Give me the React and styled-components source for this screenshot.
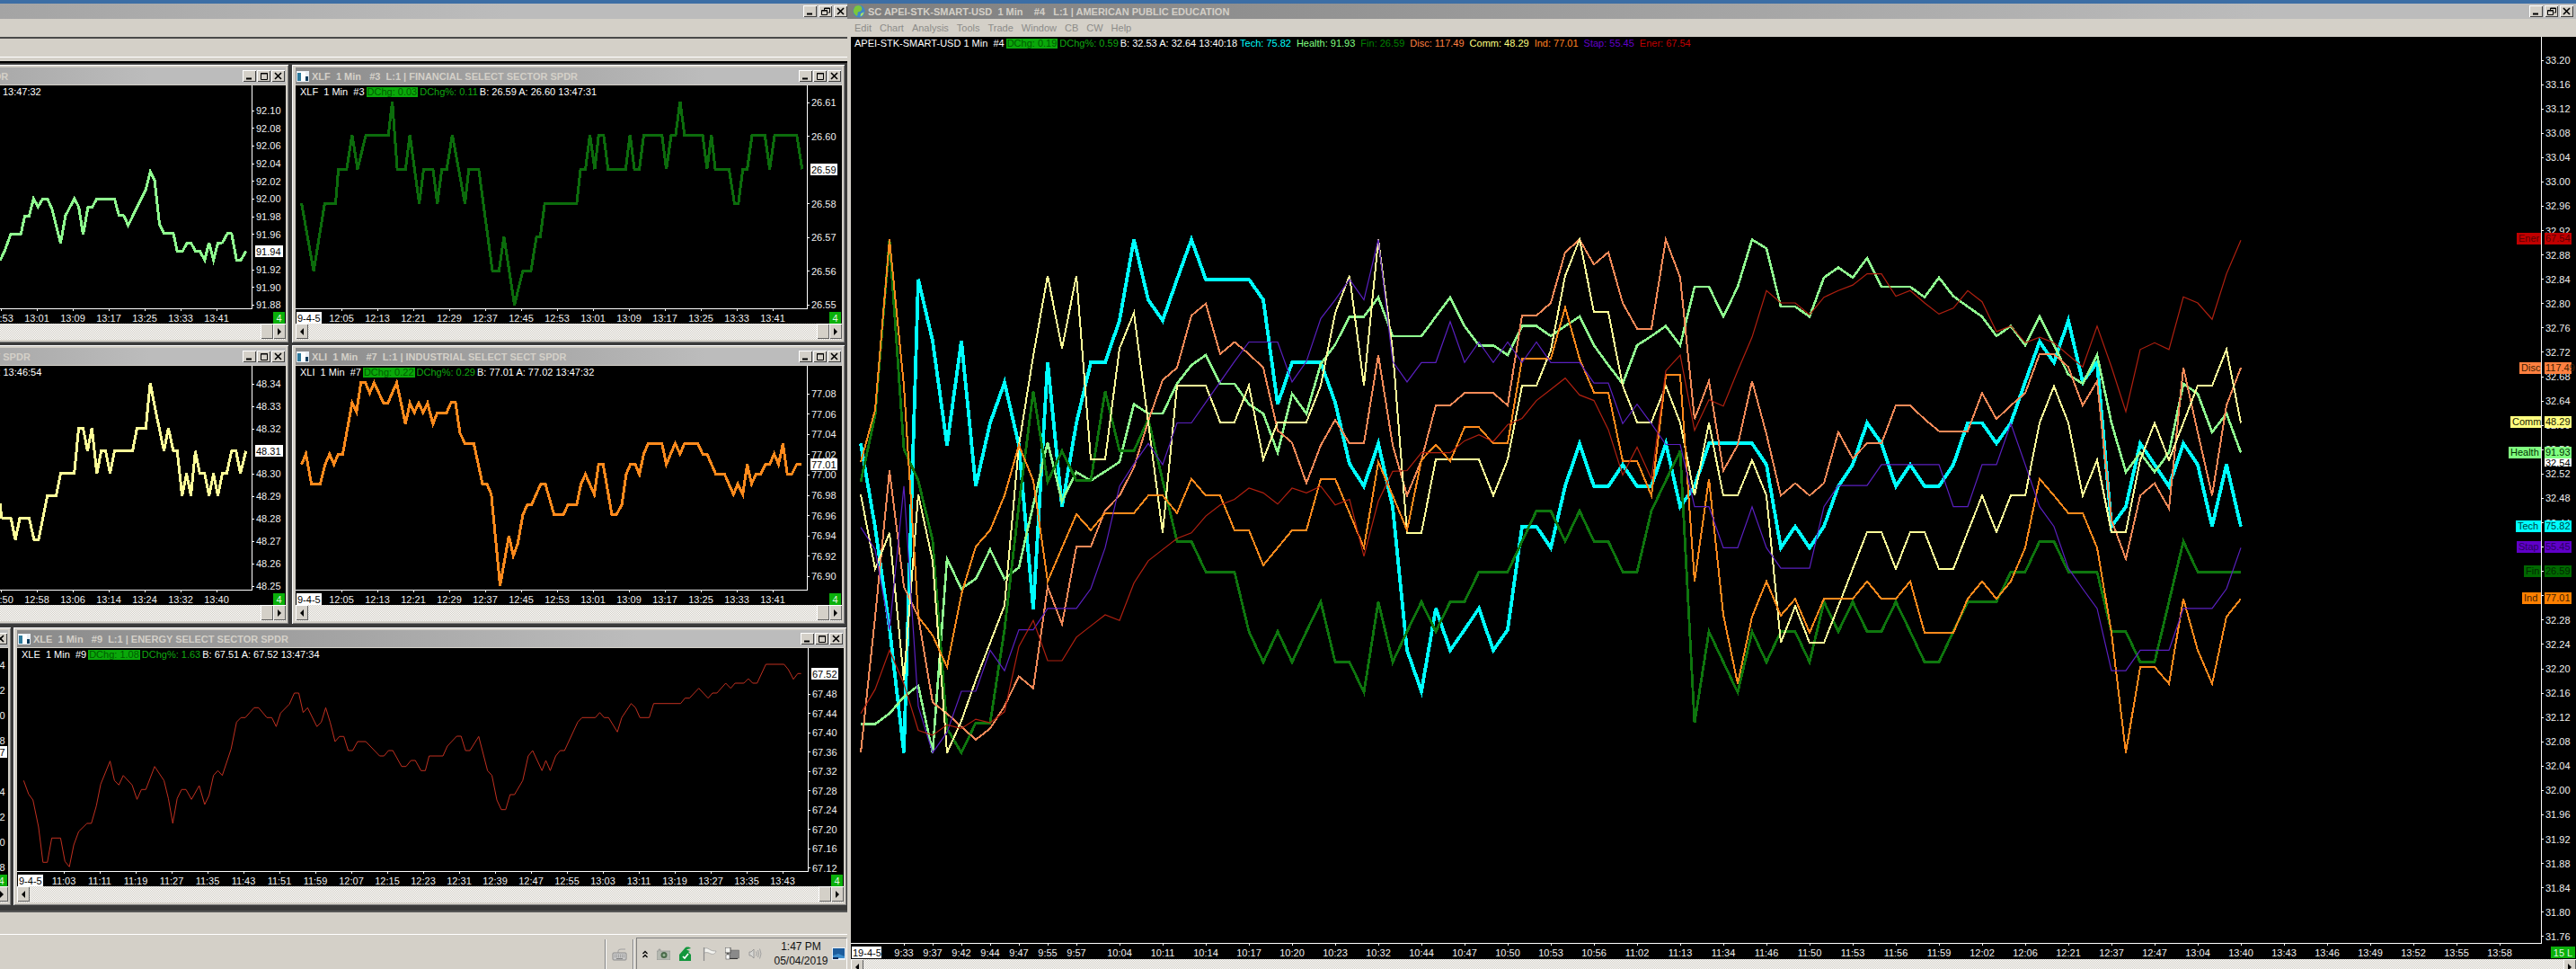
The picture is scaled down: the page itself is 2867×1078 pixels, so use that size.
import React from 'react'
import styled, { createGlobalStyle } from 'styled-components'

const GlobalStyle = createGlobalStyle`
  html, body { margin: 0; padding: 0; background: #d4d0c8; }
  body { font-family: "Liberation Sans", Arial, sans-serif; font-size: 11px; }
`;

const Page = styled.div`
  width: 2867px;
  height: 1078px;
  overflow: hidden;
  display: flex;
  flex-direction: column;
  background: #d4d0c8;
`;

const BlueStrip = styled.div`
  height: 4px;
  flex: none;
  background: #3c6ea5;
`;

const Frames = styled.div`
  flex: 1;
  display: flex;
  min-height: 0;
`;

const LeftFrame = styled.div`
  width: 943px;
  flex: none;
  display: flex;
  flex-direction: column;
  overflow: hidden;
`;

const MainFrame = styled.div`
  flex: 1;
  display: flex;
  flex-direction: column;
  min-width: 0;
`;

const TitleBar = styled.div`
  height: ${props => props.$height}px;
  flex: none;
  display: flex;
  align-items: center;
  gap: 3px;
  padding-left: ${props => props.$pad}px;
  background: linear-gradient(to right, ${props => props.$from}, #bcbcbc ${props => props.$stop});
  color: #d4d0c8;
  font-weight: bold;
  white-space: pre;
  overflow: hidden;
`;

const TitleText = styled.span`
  flex: 1;
  min-width: 0;
  overflow: hidden;
  font-size: 11px;
`;

const WinButtons = styled.div`
  display: flex;
  gap: ${props => props.$gap}px;
  padding-right: ${props => props.$right}px;
  flex: none;
`;

const WinButton = styled.div`
  width: 15px;
  height: 13px;
  background: #d4d0c8;
  box-shadow: inset 1px 1px 0 #fff, inset -1px -1px 0 #404040;
  display: flex;
  align-items: center;
  justify-content: center;
`;

const MenuBar = styled.div`
  height: 20px;
  flex: none;
  display: flex;
  align-items: center;
  gap: 9px;
  padding-left: 8px;
  color: #8c8c88;
  font-size: 11px;
`;

const ToolStrip = styled.div`
  height: 27px;
  flex: none;
  box-sizing: border-box;
  border-top: 2px solid #4a4a4a;
  position: relative;
  &::after {
    content: "";
    display: block;
    height: 1px;
    margin-top: 20px;
    background: #fff;
  }
`;

const Workspace = styled.div`
  height: 945px;
  flex: none;
  box-sizing: border-box;
  border-top: 2px solid #000;
  padding-top: 2px;
  background: #3a3a3a;
  display: flex;
  flex-direction: column;
`;

const WindowRow = styled.div`
  height: ${props => props.$height}px;
  margin-top: ${props => props.$top}px;
  padding-right: ${props => props.$right}px;
  flex: none;
  display: flex;
  justify-content: flex-end;
  gap: ${props => props.$gap}px;
  overflow: hidden;
`;

const SubWindow = styled.div`
  width: ${props => props.$width}px;
  flex: none;
  box-sizing: border-box;
  padding: 3px 3px 3px 4px;
  background: #d4d0c8;
  box-shadow: inset 1px 1px 0 #fff, inset -1px -1px 0 #808080;
  display: flex;
  flex-direction: column;
`;

const ChartPane = styled.div`
  position: relative;
  background: #000;
  margin-top: ${props => props.$top}px;
  margin-left: ${props => props.$inset || 0}px;
  height: ${props => props.$height}px;
  flex: none;
  overflow: hidden;
`;

const ChartSvg = styled.svg`
  display: block;
  font-family: "Liberation Sans", Arial, sans-serif;
  font-size: 11px;
`;

const HeaderRow = styled.div`
  position: absolute;
  top: ${props => props.$top}px;
  left: ${props => props.$left}px;
  height: 11px;
  display: flex;
  align-items: center;
  gap: ${props => props.$gap}px;
  color: #fff;
  font-size: 11px;
  line-height: 11px;
  white-space: pre;
`;

const HeaderExtras = styled.div`
  display: flex;
  gap: 6px;
  margin-left: 1px;
`;

const ChangeChip = styled.span`
  background: #0aa80a;
  color: #005c00;
  padding: 0 1px;
  height: 11px;
`;

const HeaderItem = styled.span`
  color: ${props => props.$color || '#fff'};
`;

const ScrollTrack = styled.div`
  height: ${props => props.$height}px;
  margin-left: ${props => props.$inset || 0}px;
  flex: none;
  display: flex;
  justify-content: space-between;
  background-color: #e8e6e0;
  background-image: conic-gradient(#fff 25%, #cfcbc2 0 50%, #fff 0 75%, #cfcbc2 0);
  background-size: 2px 2px;
  overflow: hidden;
`;

const ScrollGroup = styled.div`
  display: flex;
`;

const ScrollButton = styled.div`
  width: ${props => props.$width}px;
  height: 17px;
  background: #d4d0c8;
  box-shadow: inset 1px 1px 0 #fff, inset -1px -1px 0 #606060;
  display: flex;
  align-items: center;
  justify-content: center;
`;

const Arrow = styled.i`
  width: 0;
  height: 0;
  border-top: 4px solid transparent;
  border-bottom: 4px solid transparent;
  border-left: ${props => props.$left ? 'none' : '4px solid #000'};
  border-right: ${props => props.$left ? '4px solid #000' : 'none'};
`;

const GrayBand = styled.div`
  height: 26px;
  flex: none;
  box-sizing: border-box;
  border-top: 2px solid #555;
`;

const TaskBar = styled.div`
  flex: 1;
  box-sizing: border-box;
  border-top: 1px solid #fff;
  padding-top: 3px;
  display: flex;
  justify-content: flex-end;
  align-items: stretch;
`;

const TaskDivider = styled.div`
  width: 1px;
  flex: none;
  margin: 2px 0 0 0;
  background: #808080;
  box-shadow: 1px 0 0 #fff;
`;

const Keyboard = styled.div`
  width: 30px;
  flex: none;
  display: flex;
  align-items: center;
  justify-content: center;
  padding-top: 3px;
`;

const TrayBox = styled.div`
  width: 235px;
  flex: none;
  margin-left: 3px;
  box-sizing: border-box;
  border-top: 1px solid #808080;
  border-left: 1px solid #808080;
  border-right: 1px solid #fff;
  padding: 0 1px 0 6px;
  display: flex;
  align-items: center;
`;

const TrayIcons = styled.div`
  display: flex;
  align-items: center;
  justify-content: space-between;
  width: 134px;
  margin-right: 8px;
  flex: none;
`;

const Clock = styled.div`
  width: 69px;
  flex: none;
  text-align: center;
  font-size: 12px;
  line-height: 16px;
  color: #111;
`;

// charts

const mainX = i => 958 + 16 * i;
const mainY = z => 230 + z / 2.412;

const MAIN_SERIES = [
  { color: '#00ffff', width: 3.8, data: [635,860,1130,1465,195,360,640,360,750,580,472,640,1080,418,805,580,418,418,305,88,250,305,195,88,195,195,195,195,250,530,418,418,418,525,690,750,635,805,1190,1300,1078,1190,1135,1078,1190,1135,858,858,915,750,635,750,750,692,750,750,635,805,750,635,635,635,635,692,915,858,915,858,750,692,580,635,750,692,750,750,692,580,580,635,580,470,362,418,305,470,418,858,805,635,692,750,635,692,858,692,858] },
  { color: '#90ff90', width: 2.6, data: [1388,1388,1360,1315,1285,1465,945,1025,998,920,998,968,800,632,790,712,735,710,685,530,555,555,475,425,398,475,475,530,555,660,502,555,422,370,295,295,243,347,347,347,295,243,320,372,372,398,320,320,347,320,295,372,425,475,372,347,320,372,215,215,295,215,88,112,268,268,295,190,163,190,138,215,215,215,243,190,240,268,295,347,320,372,295,372,450,475,398,580,712,660,712,660,475,502,605,555,660] },
  { color: '#0e760e', width: 2.8, data: [738,560,90,650,735,895,1400,1465,1385,1385,1135,800,495,738,655,735,735,495,655,655,570,735,898,898,980,980,980,1140,1222,1140,1222,1140,1060,1222,1222,1303,1060,1222,1140,1060,1140,1060,1060,980,980,980,898,816,816,898,816,898,898,980,980,816,735,655,1385,1140,1222,1303,1140,1222,1140,1140,1222,1060,1140,1060,1140,1140,1060,1140,1222,1222,1140,1060,1060,1060,980,980,898,898,980,980,980,1140,1140,1222,1222,1060,898,980,980,980,980] },
  { color: '#f48a58', width: 2, data: [1465,1100,708,1020,1100,1330,1360,1395,1430,1400,1340,1260,1292,1020,1120,912,912,815,775,700,575,465,432,292,260,395,363,395,432,600,633,742,640,572,635,635,398,640,775,680,533,533,500,500,500,533,292,292,258,122,88,155,122,258,327,327,88,190,570,468,708,640,468,610,775,742,775,742,605,675,635,635,533,533,570,602,602,602,500,570,533,500,395,395,430,533,468,840,945,775,742,810,432,605,775,533,432] },
  { color: '#ffff99', width: 2, data: [772,972,875,1270,772,950,1465,1380,1270,1170,1070,640,400,185,380,185,678,678,380,285,580,875,480,480,480,578,578,480,678,578,578,578,480,285,185,480,88,385,875,875,678,678,678,678,775,678,480,480,385,185,88,283,283,480,578,578,480,580,775,580,775,775,680,775,1170,1072,1170,1170,1072,972,873,873,972,873,873,972,972,873,775,873,775,775,580,482,580,775,680,873,873,680,580,680,580,480,480,383,580] },
  { color: '#ff8a1c', width: 2, data: [685,545,88,480,1100,1150,1235,1040,912,868,775,640,735,1005,915,825,868,822,822,822,775,775,822,730,775,775,868,868,962,915,868,868,730,730,822,915,685,775,868,680,638,683,592,592,635,635,408,408,408,270,408,498,498,682,682,775,452,452,1005,730,1095,1280,1100,1005,1097,1052,1143,1052,1052,1052,1005,1052,1052,1005,1143,1143,1143,1052,1005,1052,1005,915,730,775,822,822,915,1143,1465,1235,1235,1280,1052,1190,1280,1100,1052] },
  { color: '#5a20c0', width: 1.2, data: [860,920,1135,750,1340,1465,1410,1300,1300,1190,1245,1135,1135,1078,1078,1078,1025,915,750,690,635,692,580,580,525,470,415,363,363,363,470,415,300,250,195,250,88,415,470,418,418,308,418,363,418,363,418,363,418,418,418,473,473,582,530,582,638,638,805,805,915,915,805,915,970,970,970,805,748,748,748,692,692,692,692,692,805,805,692,692,582,692,805,858,970,1025,1078,1245,1245,1190,1190,1190,1078,1078,1078,1025,915] },
  { color: '#b02010', width: 1.2, data: [1360,1295,1190,1280,1405,1418,1390,1400,1375,1385,1355,1180,1110,1218,1218,1155,1125,1095,1110,1010,950,920,890,875,830,800,785,755,768,798,755,768,750,800,785,938,790,710,708,660,660,660,628,612,630,585,568,520,490,460,505,520,598,720,645,730,440,398,600,518,535,440,350,225,258,258,290,243,225,210,180,180,240,225,258,288,272,225,255,335,320,365,350,365,398,430,320,430,550,383,365,383,242,258,302,180,90] },
].map(s => ({ color: s.color, width: s.width, points: s.data.map((z, i) => `${mainX(i)},${mainY(z).toFixed(1)}`).join(' ') }));

// traced from the screenshot at 1.633x horizontally and 3x vertically
const trace = (flat, y0) => {
  const out = [];
  for (let i = 0; i < flat.length; i += 2) {
    out.push(`${(flat[i] / 1.633).toFixed(1)},${(y0 + flat[i + 1] / 3).toFixed(1)}`);
  }
  return out.join(' ');
};

const HEALTH_LINE = [0,870,8,840,20,780,38,780,45,720,53,720,61,663,69,690,78,663,86,663,94,695,110,812,119,720,135,663,143,690,151,783,160,690,168,690,176,663,208,663,216,718,225,720,233,752,265,632,273,573,281,603,290,750,298,778,315,778,322,838,332,838,340,810,347,810,355,838,363,838,372,868,380,810,388,868,396,812,404,810,414,778,421,780,430,868,438,868,447,838];
const FIN_LINE = [548,678,570,905,590,680,610,680,615,565,630,565,640,450,650,565,665,450,706,450,713,338,722,565,737,565,745,450,762,680,770,565,787,565,795,680,803,565,812,565,822,450,845,680,852,565,870,565,895,905,907,905,916,790,935,1018,950,905,965,905,975,790,982,790,990,680,1048,680,1055,565,1064,565,1072,450,1081,565,1088,450,1097,450,1105,565,1137,565,1145,450,1153,565,1162,565,1170,450,1203,450,1211,565,1220,450,1228,450,1236,338,1244,450,1277,450,1285,565,1293,450,1300,565,1325,565,1335,680,1342,680,1350,565,1358,565,1367,450,1390,450,1399,565,1408,450,1448,450,1458,565];
const COMM_LINE = [0,600,3,648,20,650,28,722,36,650,53,650,62,722,70,722,86,575,102,575,110,500,135,500,143,348,151,348,159,425,167,348,176,500,184,425,192,425,200,500,208,425,241,425,249,348,265,348,273,198,281,275,298,425,306,348,315,425,322,425,331,575,339,500,347,575,355,425,363,500,372,500,380,575,388,500,396,575,404,500,412,500,421,425,429,425,437,500,447,425];
const IND_LINE = [548,470,556,435,566,535,582,535,591,470,599,435,607,470,615,435,623,435,640,265,648,295,656,197,664,197,672,232,680,197,697,265,705,265,721,197,737,335,745,265,753,297,761,265,769,297,777,265,787,335,795,297,812,297,820,263,828,263,836,365,845,400,861,400,877,535,885,535,893,570,909,875,925,708,933,775,941,735,950,640,958,605,966,605,983,535,991,535,1007,638,1024,638,1032,605,1048,605,1056,535,1064,503,1080,570,1088,468,1096,468,1112,638,1120,638,1130,605,1138,503,1146,468,1154,468,1162,503,1170,435,1178,400,1203,400,1211,470,1227,400,1236,435,1244,400,1268,400,1277,435,1285,435,1301,503,1317,503,1333,570,1341,535,1350,570,1358,470,1366,535,1374,503,1382,503,1391,470,1399,470,1407,435,1415,470,1423,400,1431,503,1439,503,1448,470,1456,470];
const ENER_LINE = [43,565,52,610,60,630,70,720,78,838,86,838,94,757,110,757,118,835,126,853,134,780,143,735,158,708,166,708,175,650,183,577,200,500,208,565,216,580,224,548,240,580,249,628,257,595,265,595,281,518,298,565,306,625,314,708,322,625,330,595,338,595,348,628,362,582,372,645,380,615,388,548,396,532,404,548,420,460,430,370,438,355,446,355,454,338,462,322,470,322,485,355,494,355,502,385,510,340,526,310,535,273,543,273,551,338,559,322,576,385,584,370,592,322,600,370,609,435,617,418,625,418,633,465,641,465,650,435,665,435,690,483,698,483,706,465,714,465,730,518,738,518,747,498,755,498,765,532,773,532,780,483,805,483,813,450,830,417,838,417,846,465,854,465,870,418,886,532,894,548,903,630,911,662,919,662,927,612,935,612,950,565,960,483,968,465,985,532,992,498,1000,532,1010,483,1018,465,1026,465,1050,370,1058,355,1082,355,1090,338,1098,355,1106,355,1122,403,1130,355,1147,308,1155,322,1163,355,1180,355,1188,308,1237,308,1245,290,1253,290,1270,257,1287,290,1295,273,1303,273,1319,240,1328,257,1336,240,1352,240,1360,225,1368,240,1376,240,1392,177,1425,177,1433,195,1442,227,1450,208,1456,208];

const ladder = (labels, start, step) => labels.map((label, i) => ({ label, y: start + step * i }));
const timeRow = (labels, start) => labels.map((label, i) => ({ label, x: start + 40 * i }));

const MID_TIMES = ['12:05','12:13','12:21','12:29','12:37','12:45','12:53','13:01','13:09','13:17','13:25','13:33','13:41'];

const MAIN_LABELS = ['9:33','9:37','9:42','9:44','9:47','9:55','9:57','10:04','10:11','10:14','10:17','10:20','10:23','10:32','10:44','10:47','10:50','10:53','10:56','11:02','11:13','11:34','11:46','11:50','11:53','11:56','11:59','12:02','12:06','12:21','12:37','12:47','13:04','13:40','13:43','13:46','13:49','13:52','13:55','13:58'];
const mainTickX = i => (i < 7 ? 1006 + 32 * i : 1246 + 48 * (i - 7));

const MAIN_TIMES = MAIN_LABELS.map((label, i) => ({ label, x: mainTickX(i) }));
const MAIN_PRICES = Array.from({ length: 37 }, (_, i) => ({ label: (33.2 - 0.04 * i).toFixed(2), y: 67 + 27.08 * i }));

const MAIN_TAGS = [
  { name: 'Ener', value: '67.54', y: 259, x: 2801, bg: '#c00000', fg: '#5c0000' },
  { name: 'Disc', value: '117.49', y: 403, x: 2804, bg: '#ff8040', fg: '#402000' },
  { name: 'Comm', value: '48.29', y: 463, x: 2794, bg: '#ffff80', fg: '#202000' },
  { name: 'Health', value: '91.93', y: 497, x: 2792, bg: '#80ff80', fg: '#003000' },
  { name: 'Tech', value: '75.82', y: 579, x: 2800, bg: '#00ffff', fg: '#004040' },
  { name: 'Stap', value: '55.45', y: 602, x: 2801, bg: '#6000c8', fg: '#280060' },
  { name: 'Fin', value: '26.59', y: 629, x: 2809, bg: '#006800', fg: '#002800' },
  { name: 'Ind', value: '77.01', y: 659, x: 2807, bg: '#ff8000', fg: '#402000' },
];

const Chart = ({ left, top, width, height, axisX, axisY, ticks, last, times, date, dateWidth, corner, cornerWidth, series, tags, lineTop }) => (
  <ChartSvg width={width} height={height} viewBox={`${left} ${top} ${width} ${height}`}>
    {series.map(s => (
      <polyline
        key={s.color}
        points={s.points}
        fill="none"
        stroke={s.color}
        strokeWidth={s.width}
        strokeLinejoin="miter"
        shapeRendering={s.width >= 2 ? 'crispEdges' : 'auto'}
      />
    ))}
    <path d={`M${axisX} ${lineTop}V${axisY}H${left}`} fill="none" stroke="#fff" strokeWidth="1" shapeRendering="crispEdges" />
    {ticks.map(t => (
      <g key={t.label}>
        <path d={`M${axisX} ${t.y}h3`} stroke="#fff" shapeRendering="crispEdges" />
        <text x={axisX + 5} y={t.y + 4} fill="#f0f0f0">{t.label}</text>
      </g>
    ))}
    {last && (
      <g>
        <rect x={axisX + 4} y={last.y - 7} width={last.width || 30} height={last.h || 13} fill="#fff" />
        <text x={axisX + 5} y={last.y + 4} fill="#000">{last.label}</text>
      </g>
    )}
    {times.map(t => (
      <g key={t.label}>
        <path d={`M${t.x} ${axisY}v3`} stroke="#fff" shapeRendering="crispEdges" />
        <text x={t.x} y={axisY + 15} textAnchor="middle" fill="#f0f0f0">{t.label}</text>
      </g>
    ))}
    <rect x={left + 1} y={axisY + 4} width={dateWidth} height={13} fill="#fff" />
    <text x={left + 2} y={axisY + 15} fill="#000">{date}</text>
    <rect x={left + width - cornerWidth - 1} y={axisY + 4} width={cornerWidth} height={13} fill="#0ab00a" />
    <text x={left + width - cornerWidth / 2 - 1} y={axisY + 15} textAnchor="middle" fill="#dff5df">{corner}</text>
    {tags && tags.map(tag => (
      <g key={tag.name}>
        <rect x={tag.x} y={tag.y} width={2828 - tag.x} height={13} fill={tag.bg} />
        <text x={tag.x + 2} y={tag.y + 10} fill={tag.fg}>{tag.name}</text>
        <rect x={2832} y={tag.y} width={30} height={13} fill={tag.bg} />
        <text x={2833} y={tag.y + 10} fill={tag.fg}>{tag.value}</text>
      </g>
    ))}
  </ChartSvg>
);

const Glyph = ({ kind }) => {
  if (kind === 'min') return <svg width="9" height="9"><path d="M1 7.5h6" stroke="#000" strokeWidth="2" /></svg>;
  if (kind === 'max') return <svg width="10" height="10"><path d="M1.5 1.5h7v7h-7zM1 2h8" fill="none" stroke="#000" /></svg>;
  if (kind === 'restore') return <svg width="10" height="10"><path d="M3.5 3V1h6v5h-2M.5 3.5h6v5h-6zM.5 4h6M3 1.5h6" fill="none" stroke="#000" /></svg>;
  return <svg width="9" height="9"><path d="M1 1l7 7M8 1l-7 7" stroke="#000" strokeWidth="1.6" /></svg>;
};

const Buttons = ({ middle, gap, right }) => (
  <WinButtons $gap={gap} $right={right}>
    <WinButton><Glyph kind="min" /></WinButton>
    <WinButton><Glyph kind={middle} /></WinButton>
    <WinButton><Glyph kind="close" /></WinButton>
  </WinButtons>
);

const DocIcon = () => (
  <svg width="14" height="12" viewBox="0 0 14 12">
    <rect x="0" y="0" width="14" height="12" fill="#e8eef4" />
    <rect x="1" y="1" width="9" height="10" fill="#fff" />
    <rect x="1" y="2" width="4" height="9" fill="#2c7a9c" />
    <rect x="10" y="6" width="3" height="5" fill="#0c3c5c" />
  </svg>
);

const GlobeIcon = () => (
  <svg width="14" height="15" viewBox="0 0 14 15">
    <ellipse cx="7" cy="7.5" rx="6.5" ry="7" fill="#3f86c8" />
    <path d="M3 2c3-2 6-1 7 1 1 3-1 5-3 5s-1 3-2 5C3 12 0 9 1 6c.5-2 1-3 2-4z" fill="#7cc63c" />
    <path d="M9 10c2-1 3-1 3.500-2 0 3-2 5-4 5.500z" fill="#a8e070" />
  </svg>
);

const Scroller = ({ height }) => (
  <ScrollTrack $height={height}>
    <ScrollButton $width={14}><Arrow $left /></ScrollButton>
    <ScrollGroup>
      <ScrollButton $width={14} />
      <ScrollButton $width={14}><Arrow /></ScrollButton>
    </ScrollGroup>
  </ScrollTrack>
);

const Window = ({ width, title, chart, header, paneHeight }) => (
  <SubWindow $width={width}>
    <TitleBar $height={19} $pad={1} $from="#8a8a8a" $stop="75%">
      {title && <DocIcon />}
      <TitleText>{title}</TitleText>
      <Buttons middle="max" gap={1} right={1} />
    </TitleBar>
    <ChartPane $top={1} $height={paneHeight}>
      <Chart {...chart} />
      {header && (
        <HeaderRow $top={2} $left={5} $gap={2}>
          <HeaderItem>{header.name}</HeaderItem>
          <ChangeChip>{header.change}</ChangeChip>
          <HeaderItem $color="#10a810">{header.pct}</HeaderItem>
          <HeaderItem>{header.quote}</HeaderItem>
        </HeaderRow>
      )}
    </ChartPane>
    <Scroller height={18} />
  </SubWindow>
);

const subChart = (left, top, height, width, axisX, rest) => ({
  left, top, height, width, axisX,
  axisY: top + height - 17,
  lineTop: top,
  date: '9-4-5',
  dateWidth: 28,
  corner: '4',
  cornerWidth: 13,
  ...rest,
});

const HEADER_EXTRAS = [
  ['Tech: 75.82', '#00ffff'],
  ['Health: 91.93', '#80ff80'],
  ['Fin: 26.59', '#008000'],
  ['Disc: 117.49', '#ff8040'],
  ['Comm: 48.29', '#ffff80'],
  ['Ind: 77.01', '#ff8020'],
  ['Stap: 55.45', '#6000c8'],
  ['Ener: 67.54', '#c00000'],
];

const KeyboardIcon = () => (
  <svg width="17" height="14" viewBox="0 0 17 14">
    <path d="M7 5V3q0-2 3-2h5" fill="none" stroke="#a0a0a0" />
    <rect x="1" y="5" width="15" height="8" rx="1" fill="#c8c8c8" stroke="#8c8c8c" />
    <path d="M3 7.500h11M3 9.500h11" stroke="#808080" strokeDasharray="1 1" />
    <path d="M5 11.500h7" stroke="#808080" />
  </svg>
);

const Chevrons = () => (
  <svg width="6" height="9" viewBox="0 0 6 9">
    <path d="M.5 4L3 1.500 5.500 4M.5 8L3 5.500 5.500 8" fill="none" stroke="#000" strokeWidth="1.3" />
  </svg>
);

const CameraIcon = () => (
  <svg width="15" height="13" viewBox="0 0 15 13">
    <path d="M0 3h2V1h2v2h11v10H0z" fill="#b4b8b0" stroke="#8a8a8a" strokeWidth=".6" />
    <circle cx="8" cy="7.500" r="3.500" fill="#4a6a4a" />
    <circle cx="8" cy="7.500" r="1.500" fill="#9ab89a" />
  </svg>
);

const ShieldIcon = () => (
  <svg width="17" height="16" viewBox="0 0 17 16">
    <path d="M8 1c3-1 5 0 6 1l-4 1c-1 0-1 1 0 1l3 1-2 1 3 3v7H1V9z" fill="#12963c" />
    <path d="M5 11l2 2 4-5" fill="none" stroke="#fff" strokeWidth="1.7" />
  </svg>
);

const FlagIcon = () => (
  <svg width="16" height="15" viewBox="0 0 16 15">
    <path d="M1.500 0v15" stroke="#8a8a8a" strokeWidth="1.2" />
    <path d="M2 1c3-1 5 1 7 2 2 1 4 1 6 1-1 3-3 4-6 3-2-1-4-2-7-1z" fill="#f4f4f0" stroke="#9a9a9a" strokeWidth=".7" />
  </svg>
);

const NetworkIcon = () => (
  <svg width="16" height="15" viewBox="0 0 16 15">
    <rect x="5" y="3" width="10.500" height="9" fill="#8a8a8a" stroke="#606060" strokeWidth=".5" />
    <rect x="0" y="0" width="6" height="6" fill="#f4f4f0" stroke="#555" />
    <path d="M3 6v6M3 12.500h11" stroke="#333" strokeWidth="1.2" />
    <rect x="1" y="8" width="4" height="5" fill="#fff" stroke="#555" strokeWidth=".6" />
  </svg>
);

const SpeakerIcon = () => (
  <svg width="16" height="14" viewBox="0 0 16 14">
    <path d="M1 5h2l3-3v10L3 9H1z" fill="#d8d8d4" stroke="#8a8a8a" strokeWidth=".8" />
    <path d="M8.500 4.500q1.500 2.500 0 5M10.500 3q2 4 0 8M12.500 1.500q3 5.500 0 11" fill="none" stroke="#a0a0a0" />
  </svg>
);

const DesktopIcon = () => (
  <svg width="15" height="14" viewBox="0 0 15 14">
    <rect width="15" height="14" fill="#e8f0f8" />
    <rect x="1" y="1" width="13" height="11" fill="#1c5c9c" />
    <path d="M1 9l6-2 7 3v2H1z" fill="#3c8ccc" />
    <rect x="1" y="11" width="6" height="2" fill="#0c2c5c" />
  </svg>
);

export default function App() {
  return (
    <Page>
      <GlobalStyle />
      <BlueStrip />
      <Frames>
        <LeftFrame>
          <TitleBar $height={17} $pad={0} $from="#a4a4a4" $stop="60%">
            <TitleText />
            <Buttons middle="restore" gap={2} right={0} />
          </TitleBar>
          <MenuBar />
          <ToolStrip />
          <Workspace>
            <WindowRow $height={309} $top={0} $right={3} $gap={4}>
              <Window
                width={615}
                title="XLV  1 Min   #2  L:1 | HEALTH CARE SELECT SECTOR"
                paneHeight={265}
                header={{ name: 'XLV  1 Min  #2', change: 'DChg: 0.18', pct: 'DChg%: 0.20', quote: 'B: 91.93 A: 91.94 13:47:32' }}
                chart={subChart(-290, 95, 265, 608, 280, {
                  ticks: ladder(['92.10','92.08','92.06','92.04','92.02','92.00','91.98','91.96','91.94','91.92','91.90','91.88'], 123, 19.67).filter(t => t.label !== '91.94'),
                  last: { label: '91.94', y: 280, width: 31 },
                  times: MID_TIMES.slice(6).map((label, i) => ({ label, x: 1 + 40 * i })),
                  series: [{ color: '#90ff90', width: 3, points: trace(HEALTH_LINE, 0) }],
                })}
              />
              <Window
                width={615}
                title="XLF  1 Min   #3  L:1 | FINANCIAL SELECT SECTOR SPDR"
                paneHeight={265}
                header={{ name: 'XLF  1 Min  #3', change: 'DChg: 0.03', pct: 'DChg%: 0.11', quote: 'B: 26.59 A: 26.60 13:47:31' }}
                chart={subChart(329, 95, 265, 608, 898, {
                  ticks: ladder(['26.61','26.60','26.59','26.58','26.57','26.56','26.55'], 114, 37.5).filter(t => t.label !== '26.59'),
                  last: { label: '26.59', y: 189 },
                  times: timeRow(MID_TIMES, 380),
                  series: [{ color: '#0c6c0c', width: 3, points: trace(FIN_LINE, 0) }],
                })}
              />
            </WindowRow>
            <WindowRow $height={310} $top={3} $right={3} $gap={4}>
              <Window
                width={615}
                title="XLP  1 Min   #6  L:1 | CONSUMER STAPLES SELECT SPDR"
                paneHeight={266}
                header={{ name: 'XLP  1 Min  #6', change: 'DChg: 0.10', pct: 'DChg%: 0.21', quote: 'B: 48.31 A: 48.32 13:46:54' }}
                chart={subChart(-290, 407, 266, 608, 280, {
                  ticks: ladder(['48.34','48.33','48.32','48.31','48.30','48.29','48.28','48.27','48.26','48.25'], 427, 25).filter(t => t.label !== '48.31'),
                  last: { label: '48.31', y: 502, width: 31 },
                  times: ['12:50','12:58','13:06','13:14','13:24','13:32','13:40'].map((label, i) => ({ label, x: 1 + 40 * i })),
                  series: [{ color: '#ffff99', width: 3, points: trace(COMM_LINE, 360) }],
                })}
              />
              <Window
                width={615}
                title="XLI  1 Min   #7  L:1 | INDUSTRIAL SELECT SECT SPDR"
                paneHeight={266}
                header={{ name: 'XLI  1 Min  #7', change: 'DChg: 0.22', pct: 'DChg%: 0.29', quote: 'B: 77.01 A: 77.02 13:47:32' }}
                chart={subChart(329, 407, 266, 608, 898, {
                  ticks: ladder(['77.08','77.06','77.04','77.02','77.00','76.98','76.96','76.94','76.92','76.90'], 438, 22.6),
                  last: { label: '77.01', y: 517 },
                  times: timeRow(MID_TIMES, 380),
                  series: [{ color: '#ff8a1c', width: 3, points: trace(IND_LINE, 360) }],
                })}
              />
            </WindowRow>
            <WindowRow $height={309} $top={4} $right={1} $gap={3}>
              <Window
                width={615}
                paneHeight={265}
                chart={subChart(-599, 721, 265, 608, -27, {
                  ticks: ladder(['75.94','75.92','75.90','75.88','75.86','75.84','75.82','75.80','75.78'], 740, 28.1).filter(t => t.label !== '75.86'),
                  last: { label: '75.87', y: 837, width: 31 },
                  times: [],
                  series: [],
                })}
              />
              <Window
                width={927}
                title="XLE  1 Min   #9  L:1 | ENERGY SELECT SECTOR SPDR"
                paneHeight={265}
                header={{ name: 'XLE  1 Min  #9', change: 'DChg: 1.08', pct: 'DChg%: 1.63', quote: 'B: 67.51 A: 67.52 13:47:34' }}
                chart={subChart(19, 721, 265, 920, 899, {
                  ticks: ladder(['67.48','67.44','67.40','67.36','67.32','67.28','67.24','67.20','67.16','67.12'], 772, 21.5),
                  last: { label: '67.52', y: 750 },
                  times: timeRow(['11:03','11:11','11:19','11:27','11:35','11:43','11:51','11:59','12:07','12:15','12:23','12:31','12:39','12:47','12:55','13:03','13:11','13:19','13:27','13:35','13:43'], 71),
                  series: [{ color: '#c03020', width: 1, points: trace(ENER_LINE, 680) }],
                })}
              />
            </WindowRow>
          </Workspace>
          <GrayBand />
          <TaskBar>
            <TaskDivider />
            <Keyboard><KeyboardIcon /></Keyboard>
            <TaskDivider />
            <TrayBox>
              <TrayIcons>
                <Chevrons />
                <CameraIcon />
                <ShieldIcon />
                <FlagIcon />
                <NetworkIcon />
                <SpeakerIcon />
              </TrayIcons>
              <Clock>1:47 PM<br />05/04/2019</Clock>
              <DesktopIcon />
            </TrayBox>
          </TaskBar>
        </LeftFrame>
        <MainFrame>
          <TitleBar $height={17} $pad={6} $from="#7e7e7e" $stop="82%">
            <GlobeIcon />
            <TitleText>SC APEI-STK-SMART-USD  1 Min    #4   L:1 | AMERICAN PUBLIC EDUCATION</TitleText>
            <Buttons middle="restore" gap={2} right={3} />
          </TitleBar>
          <MenuBar>
            <span>Edit</span><span>Chart</span><span>Analysis</span><span>Tools</span><span>Trade</span><span>Window</span><span>CB</span><span>CW</span><span>Help</span>
          </MenuBar>
          <ChartPane $top={0} $height={1026} $inset={4}>
            <Chart
              left={947}
              top={41}
              width={1920}
              height={1026}
              axisX={2828}
              axisY={1049}
              lineTop={41}
              ticks={MAIN_PRICES}
              last={{ label: '32.54', y: 515, h: 11, width: 30 }}
              times={MAIN_TIMES}
              date="19-4-5"
              dateWidth={33}
              corner="15 L"
              cornerWidth={27}
              series={MAIN_SERIES}
              tags={MAIN_TAGS}
            />
            <HeaderRow $top={2} $left={4} $gap={2}>
              <HeaderItem>APEI-STK-SMART-USD 1 Min  #4</HeaderItem>
              <ChangeChip>DChg: 0.19</ChangeChip>
              <HeaderItem $color="#10a810">DChg%: 0.59</HeaderItem>
              <HeaderItem>B: 32.53 A: 32.64 13:40:18</HeaderItem>
              <HeaderExtras>
                {HEADER_EXTRAS.map(([text, color]) => (
                  <HeaderItem key={text} $color={color}>{text}</HeaderItem>
                ))}
              </HeaderExtras>
            </HeaderRow>
          </ChartPane>
          <ScrollTrack $height={11} $inset={4}>
            <ScrollButton $width={14}><Arrow $left /></ScrollButton>
            <ScrollButton $width={14}><Arrow /></ScrollButton>
          </ScrollTrack>
        </MainFrame>
      </Frames>
    </Page>
  );
}
